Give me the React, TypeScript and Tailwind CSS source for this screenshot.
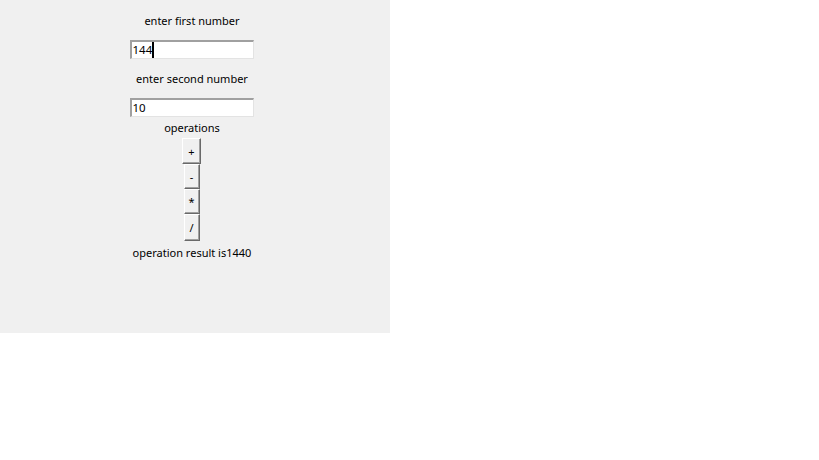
import React from "react";

const font = { fontFamily: '"Noto Sans", "Open Sans", sans-serif' };

function Btn({ label, wide, h }: { label: string; wide?: boolean; h: string }) {
  return (
    <div
      className={`${wide ? "w-[19px]" : "w-[16px]"} ${h} flex items-center justify-center bg-[#f0f0f0] border-t border-l border-t-white border-l-white border-r border-b border-r-[#696969] border-b-[#696969] shadow-[inset_-1px_-1px_0_#a0a0a0] text-[11px] leading-none text-black`}
    >
      {label}
    </div>
  );
}

export default function App() {
  return (
    <div className="w-[819px] h-[460px] bg-white" style={font}>
      <div className="w-[390px] h-[333px] bg-[#f0f0f0] flex flex-col items-center pr-[8px] text-[11px] text-black">
        <div className="mt-[13px] h-[16px] leading-[16px] pl-[2px]">enter first number</div>
        <div className="mt-[11px] w-[124px] h-[19px] bg-white border-t-2 border-l-2 border-t-[#a0a0a0] border-l-[#a0a0a0] border-r border-b border-r-[#e3e3e3] border-b-[#e3e3e3] flex items-center pl-[1px] leading-none ml-[1px] text-[11.5px]">
          <span>144</span>
          <span className="w-[2px] h-[16px] bg-black"></span>
        </div>
        <div className="mt-[12px] h-[16px] leading-[16px] pl-[2px]">enter second number</div>
        <div className="mt-[11px] w-[124px] h-[19px] bg-white border-t-2 border-l-2 border-t-[#a0a0a0] border-l-[#a0a0a0] border-r border-b border-r-[#e3e3e3] border-b-[#e3e3e3] flex items-center pl-[1px] leading-none ml-[1px] text-[11.5px]">
          <span>10</span>
        </div>
        <div className="mt-[3px] h-[16px] leading-[16px] pl-[2px]">operations</div>
        <div className="mt-[2px] flex flex-col items-center ml-[1px]">
          <Btn label="+" wide h="h-[26px]" />
          <Btn label="-" h="h-[25px]" />
          <Btn label="*" h="h-[25px]" />
          <Btn label="/" h="h-[27px]" />
        </div>
        <div className="mt-[4px] h-[16px] leading-[16px] pl-[2px]">operation result is1440</div>
      </div>
    </div>
  );
}
